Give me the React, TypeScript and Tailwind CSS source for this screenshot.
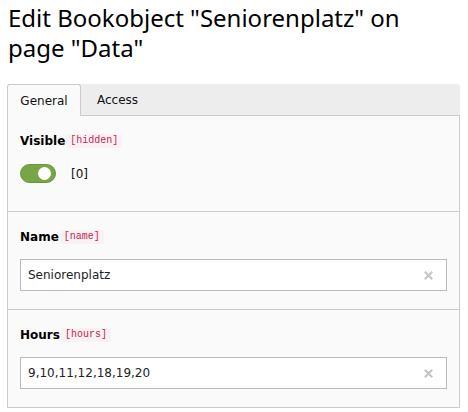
import React from 'react';

const ClearIcon = () => (
  <svg width="9" height="9" viewBox="0 0 9 9" className="text-[#c4c4c4]">
    <path d="M1.5 1.5L7.5 7.5M7.5 1.5L1.5 7.5" stroke="currentColor" strokeWidth="2" strokeLinecap="square" />
  </svg>
);

const FieldLabel = ({ label, field }: { label: string; field: string }) => (
  <div className="flex items-center h-[18px]">
    <span className="font-bold text-[12px] text-[#000]">{label}</span>
    <code className="ml-[1px] px-[4px] py-[2px] text-[10px] leading-[10px] text-[#c7254e] bg-[#f9f2f4] rounded-[3px] font-['Liberation_Mono',monospace]">
      [{field}]
    </code>
  </div>
);

const TextField = ({ value }: { value: string }) => (
  <div className="mt-[13px] h-[32px] flex items-center bg-white border border-[#bbbbbb] pl-[7px] pr-[13px]">
    <span className="flex-1 text-[12px] text-[#222]">{value}</span>
    <ClearIcon />
  </div>
);

export default function App() {
  return (
    <div className="w-[468px] h-[412px] bg-white font-['DejaVu_Sans',Verdana,sans-serif] text-[#333] overflow-hidden">
      <h1 className="pl-[8px] pt-[3px] pr-[8px] text-[24px] leading-[30px] text-black font-['Noto_Sans',sans-serif] font-normal">
        Edit Bookobject "Seniorenplatz" on page "Data"
      </h1>

      <div className="ml-[7px] mr-[8px] mt-[21px]">
        {/* Tabs */}
        <div className="flex h-[32px] bg-[#ededed] border-b border-[#cccccc] rounded-t-[3px]">
          <div className="w-[74px] h-[32px] flex items-center justify-center bg-[#fafafa] border border-b-0 border-[#cccccc] rounded-t-[3px] text-[12px] text-[#111]">
            General
          </div>
          <div className="px-[16px] flex items-center text-[12px] text-[#111]">Access</div>
        </div>

        <div className="bg-[#fafafa] border border-t-0 border-[#cccccc]">
          {/* Visible */}
          <div className="h-[96px] pt-[16px] px-[12px] border-b border-[#cccccc]">
            <FieldLabel label="Visible" field="hidden" />
            <div className="mt-[14px] flex items-center gap-[15px]">
              <div className="w-[36px] h-[19px] rounded-full bg-[#78a546] border border-[#6a943c] flex items-center justify-end pr-[4px]">
                <div className="w-[13px] h-[13px] rounded-full bg-white" />
              </div>
              <span className="text-[12px] text-[#111]">[0]</span>
            </div>
          </div>

          {/* Name */}
          <div className="h-[98px] pt-[16px] px-[12px] border-b border-[#cccccc]">
            <FieldLabel label="Name" field="name" />
            <TextField value="Seniorenplatz" />
          </div>

          {/* Hours */}
          <div className="h-[97px] pt-[16px] px-[12px]">
            <FieldLabel label="Hours" field="hours" />
            <TextField value="9,10,11,12,18,19,20" />
          </div>
        </div>
      </div>
    </div>
  );
}
